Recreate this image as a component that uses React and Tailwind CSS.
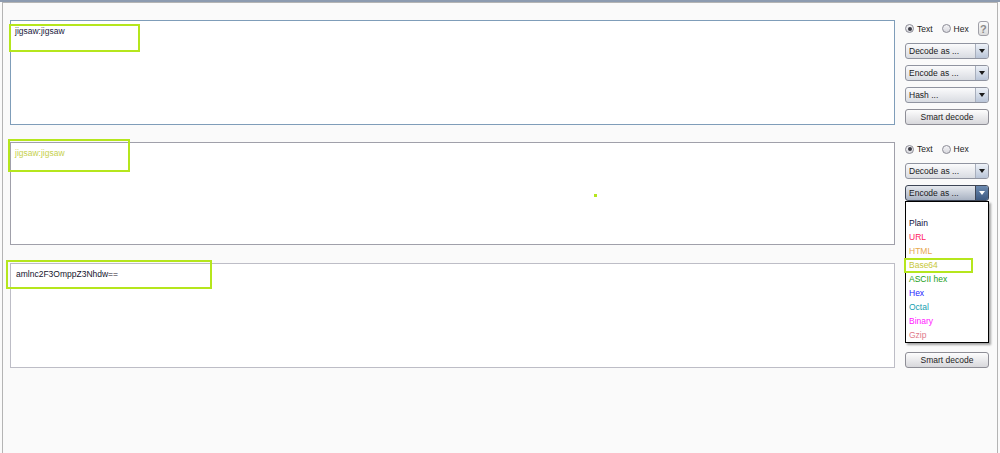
const Radio = ({ checked, label }) => (
  <label className="flex items-center gap-[3px]">
    <span className="w-[9px] h-[9px] rounded-full border border-[#8c8c96] bg-gradient-to-b from-[#f4f4f6] to-[#d8d8de] flex items-center justify-center">
      {checked && <span className="w-[4px] h-[4px] rounded-full bg-[#3c3c44]" />}
    </span>
    <span className="text-[#222]">{label}</span>
  </label>
);

const Select = ({ label, active }) => (
  <div
    className={
      active
        ? "h-[16px] w-[84px] flex rounded-[3px] border border-[#3e4656] bg-gradient-to-b from-[#e6e9ee] to-[#a8b2c2] overflow-hidden"
        : "h-[16px] w-[84px] flex rounded-[3px] border border-[#9094a0] bg-gradient-to-b from-[#fbfbfc] to-[#d9dce2] overflow-hidden"
    }
  >
    <div className="flex-1 pl-[3px] flex items-center text-[#1a1a22] truncate">{label}</div>
    <div
      className={
        active
          ? "w-[13px] border-l border-[#3e4656] bg-gradient-to-b from-[#6c8ab0] to-[#3d5a82] flex items-center justify-center"
          : "w-[13px] border-l border-[#a8afbd] bg-gradient-to-b from-[#eef2f8] to-[#b9c5d8] flex items-center justify-center"
      }
    >
      <span
        className={
          active
            ? "w-0 h-0 border-l-[3px] border-r-[3px] border-t-[4px] border-l-transparent border-r-transparent border-t-white"
            : "w-0 h-0 border-l-[3px] border-r-[3px] border-t-[4px] border-l-transparent border-r-transparent border-t-[#1a1a1a]"
        }
      />
    </div>
  </div>
);

const SmartButton = () => (
  <button className="h-[16px] w-[84px] rounded-[3px] border border-[#8e8e96] bg-gradient-to-b from-[#fdfdfd] to-[#d8d8dc] text-[#1e1e1e] flex items-center justify-center">
    Smart decode
  </button>
);

const Highlight = ({ className }) => (
  <div className={"absolute border-2 border-[#b5e61d] pointer-events-none " + className} />
);

const items = [
  { label: "", color: "" },
  { label: "Plain", color: "text-[#10103c]" },
  { label: "URL", color: "text-[#ff2060]" },
  { label: "HTML", color: "text-[#e8a850]" },
  { label: "Base64", color: "text-[#c8c838]" },
  { label: "ASCII hex", color: "text-[#22a022]" },
  { label: "Hex", color: "text-[#2424ff]" },
  { label: "Octal", color: "text-[#14a0b0]" },
  { label: "Binary", color: "text-[#ff18ff]" },
  { label: "Gzip", color: "text-[#e07888]" },
];

export default function App() {
  return (
    <div className="w-[1000px] h-[453px] bg-[#fafafa] overflow-hidden font-['Liberation_Sans',Arial,sans-serif] text-[8.5px] leading-[10px]">
      <div className="h-[2px] bg-[#8d9bb0]" />
      <div className="relative ml-[2px] w-[996px] h-[451px] border-x border-t border-[#b4b4b4] pl-[7px] pr-[8px] pt-[17px]">
        {/* panel 1 */}
        <div className="flex gap-[10px] h-[105px]">
          <div className="relative flex-1 border border-[#7f9db9] bg-white pl-[4px] pt-[5px] text-[#20203c]">
            jigsaw:jigsaw
            <Highlight className="left-[-2px] top-[3px] w-[131px] h-[28px]" />
          </div>
          <div className="w-[84px] flex flex-col pt-[1px]">
            <div className="h-[15px] flex items-center gap-[9px]">
              <Radio checked label="Text" />
              <Radio label="Hex" />
              <div className="ml-auto w-[14px] h-[15px] rounded-[3px] border border-[#a0a0a8] bg-gradient-to-b from-[#fbfbfb] to-[#dcdcdc] flex items-center justify-center text-[#8a8a8a] text-[11px] font-bold">
                ?
              </div>
            </div>
            <div className="mt-[7px] flex flex-col gap-[6px]">
              <Select label="Decode as ..." />
              <Select label="Encode as ..." />
              <Select label="Hash ..." />
            </div>
            <div className="mt-auto">
              <SmartButton />
            </div>
          </div>
        </div>

        {/* panel 2 */}
        <div className="flex gap-[10px] h-[103px] mt-[17px]">
          <div className="relative flex-1 border border-[#a0a0aa] bg-white pl-[4px] pt-[5px] text-[#c6d04c]">
            jigsaw:jigsaw
            <Highlight className="left-[-3px] top-[-4px] w-[122px] h-[33px]" />
            <div className="absolute left-[583px] top-[51px] w-[3px] h-[3px] bg-[#b5e61d]" />
          </div>
          <div className="w-[84px] flex flex-col">
            <div className="h-[14px] flex items-center gap-[9px]">
              <Radio checked label="Text" />
              <Radio label="Hex" />
            </div>
            <div className="mt-[7px] flex flex-col gap-[6px]">
              <Select label="Decode as ..." />
              <div className="relative z-10">
                <Select label="Encode as ..." active />
                <div className="absolute left-0 top-[16px] w-[84px] border border-black bg-white shadow-[2px_2px_2px_rgba(0,0,0,0.35)]">
                  {items.map((it, i) => (
                    <div key={i} className={"h-[14px] pl-[3px] flex items-center " + it.color}>
                      {it.label}
                    </div>
                  ))}
                  <Highlight className="left-[-2px] top-[56px] w-[69px] h-[15px]" />
                </div>
              </div>
              <div className="invisible">
                <Select label="Hash ..." />
              </div>
            </div>
            <div className="mt-auto invisible">
              <SmartButton />
            </div>
          </div>
        </div>

        {/* panel 3 */}
        <div className="flex gap-[10px] h-[105px] mt-[18px]">
          <div className="relative flex-1 border border-[#bdbdc6] bg-white pl-[5px] pt-[5px] text-[#14142c]">
            amlnc2F3OmppZ3Nhdw==
            <Highlight className="left-[-5px] top-[-4px] w-[206px] h-[29px]" />
          </div>
          <div className="w-[84px] flex flex-col">
            <div className="invisible">
              <div className="h-[14px] flex items-center gap-[9px]">
                <Radio checked label="Text" />
                <Radio label="Hex" />
              </div>
              <div className="mt-[7px] flex flex-col gap-[6px]">
                <Select label="Decode as ..." />
                <Select label="Encode as ..." />
                <Select label="Hash ..." />
              </div>
            </div>
            <div className="mt-auto">
              <SmartButton />
            </div>
          </div>
        </div>
      </div>
    </div>
  );
}
